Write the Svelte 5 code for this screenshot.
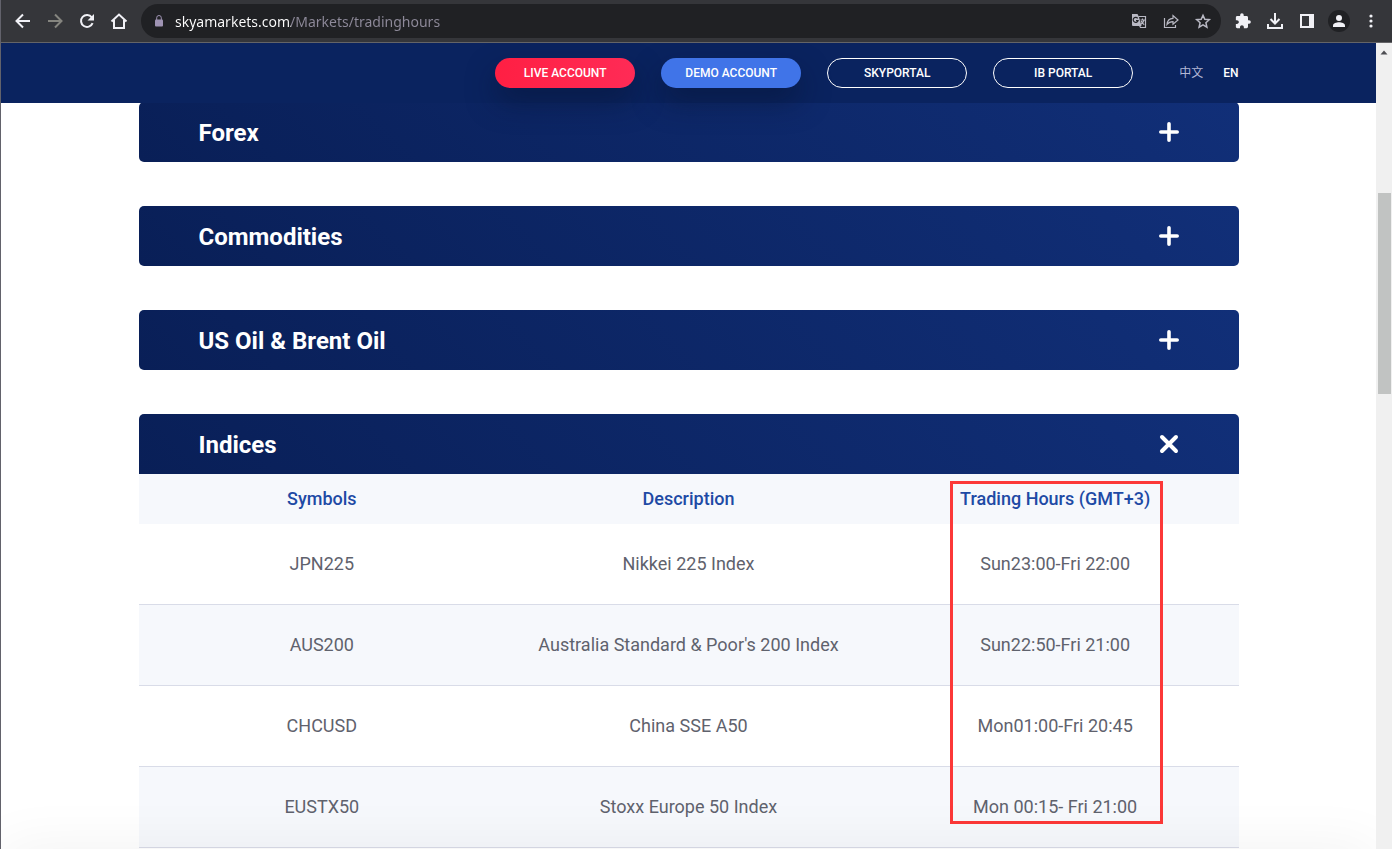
<script lang="ts">
  interface Instrument {
    symbol: string;
    description: string;
    hours: string;
  }

  interface Market {
    name: string;
    instruments: Instrument[];
  }

  const markets: Market[] = [
    { name: "Forex", instruments: [] },
    { name: "Commodities", instruments: [] },
    { name: "US Oil & Brent Oil", instruments: [] },
    {
      name: "Indices",
      instruments: [
        { symbol: "JPN225", description: "Nikkei 225 Index", hours: "Sun23:00-Fri 22:00" },
        { symbol: "AUS200", description: "Australia Standard & Poor's 200 Index", hours: "Sun22:50-Fri 21:00" },
        { symbol: "CHCUSD", description: "China SSE A50", hours: "Mon01:00-Fri 20:45" },
        { symbol: "EUSTX50", description: "Stoxx Europe 50 Index", hours: "Mon 00:15- Fri 21:00" },
      ],
    },
  ];

  let address = $state("skyamarkets.com/Markets/tradinghours");
  let openMarket = $state("Indices");

  function toggle(name: string) {
    openMarket = openMarket === name ? "" : name;
  }
</script>

<div class="browser">
  <div class="toolbar">
    <button class="tool" aria-label="Back">
      <svg class="icon" viewBox="0 0 20 20"><path d="M17 10H4M10 3.5L3.5 10l6.5 6.5" /></svg>
    </button>
    <button class="tool dim" aria-label="Forward">
      <svg class="icon" viewBox="0 0 20 20"><path d="M3 10h13M10 3.5L16.5 10 10 16.5" /></svg>
    </button>
    <button class="tool" aria-label="Reload">
      <svg class="icon" viewBox="0 0 20 20">
        <path d="M15.6 12.2A6 6 0 1 1 14.8 6.3" />
        <path class="solid" d="M17 3v6.5h-6.5z" />
      </svg>
    </button>
    <button class="tool" aria-label="Home">
      <svg class="icon" viewBox="0 0 20 20"><path d="M2.5 10.5L10 3.5l7.5 7M5 9v8h10V9" /></svg>
    </button>

    <div class="omnibox">
      <svg class="lock" viewBox="0 0 10 14">
        <path d="M2.7 6V3.8a2.3 2.3 0 0 1 4.6 0V6" />
        <rect x="1" y="5.5" width="8" height="7" rx="1" />
      </svg>
      <input class="address" type="text" aria-label="Address" spellcheck="false" bind:value={address} />
      <button class="tool muted" aria-label="Translate">
        <svg class="icon" viewBox="0 0 20 20">
          <path class="solid" d="M3 3h5.500l1.500 3 2.500 9H4a1 1 0 0 1-1-1z" />
          <path class="thin" d="M9.500 5.500h7v11h-5l-1-2M11.500 9H16M13.500 7.500V9M15 9c-.5 2-1.500 3-3 4.200M12.200 10c.6 1.600 1.700 2.800 3 3.700" />
          <path class="cutout" d="M8.700 7.300A2.500 2.500 0 1 0 9.100 9.500H7" />
        </svg>
      </button>
      <button class="tool muted" aria-label="Share">
        <svg class="icon" viewBox="0 0 20 20">
          <path class="thin" d="M3.500 7v9.500h11V14M6 13.500c.3-4 2.500-6 6-6.200V4.500L17 9l-5 4.300v-2.600c-2.800 0-4.500.8-6 2.800z" />
        </svg>
      </button>
      <button class="tool muted" aria-label="Bookmark">
        <svg class="icon" viewBox="0 0 20 20">
          <path class="medium" d="M10 4.300l1.800 4 4.500.4-3.400 3 1 4.400-3.900-2.300-3.900 2.300 1-4.400-3.400-3 4.500-.4z" />
        </svg>
      </button>
    </div>

    <button class="tool" aria-label="Extensions">
      <svg class="icon" viewBox="-2 -2 28 28">
        <path class="solid" d="M20.5 11H19V7c0-1.1-.9-2-2-2h-4V3.5a2.5 2.5 0 0 0-5 0V5H4c-1.1 0-1.99.9-1.99 2v3.8H3.5c1.49 0 2.7 1.21 2.7 2.7s-1.21 2.7-2.7 2.7H2V20c0 1.1.9 2 2 2h3.8v-1.5c0-1.49 1.21-2.7 2.7-2.7 1.49 0 2.7 1.21 2.7 2.7V22H17c1.1 0 2-.9 2-2v-4h1.5a2.5 2.5 0 0 0 0-5z" />
      </svg>
    </button>
    <button class="tool" aria-label="Downloads">
      <svg class="icon" viewBox="0 0 20 20"><path d="M10 2v10M5.5 8l4.5 4.5L14.500 8M3 13v4h14v-4" /></svg>
    </button>
    <button class="tool" aria-label="Side panel">
      <svg class="icon" viewBox="0 0 20 20"><path class="solid" fill-rule="evenodd" d="M3 3h14v14H3zM5 5v10h7V5z" /></svg>
    </button>
    <button class="tool" aria-label="Profile">
      <svg class="avatar" viewBox="0 0 22 22">
        <circle class="disc" cx="11" cy="11" r="11" />
        <circle class="solid" cx="11" cy="8" r="3" />
        <path class="solid" d="M5 17v-1.500c0-2.200 3.500-3.300 6-3.300s6 1.100 6 3.300V17z" />
      </svg>
    </button>
    <button class="tool" aria-label="Menu">
      <svg class="icon" viewBox="0 0 20 20">
        <circle class="solid" cx="10" cy="5" r="1.600" />
        <circle class="solid" cx="10" cy="10" r="1.600" />
        <circle class="solid" cx="10" cy="15" r="1.600" />
      </svg>
    </button>
  </div>

  <div class="viewport">
    <div class="page">
      <header class="site-header">
        <nav class="container nav">
          <a class="pill live" href="#live">LIVE ACCOUNT</a>
          <a class="pill demo" href="#demo">DEMO ACCOUNT</a>
          <a class="pill" href="#skyportal">SKYPORTAL</a>
          <a class="pill" href="#ibportal">IB PORTAL</a>
          <div class="languages">
            <a class="language" href="#zh" lang="zh">中文</a>
            <a class="language active" href="#en">EN</a>
          </div>
        </nav>
      </header>

      <main class="container markets">
        {#each markets as market (market.name)}
          {@const open = openMarket === market.name}
          <section>
            <h2 class="market-heading">
              <button class="market-toggle" class:open aria-expanded={open} onclick={() => toggle(market.name)}>
                <span class="market-name">{market.name}</span>
                <svg class="market-icon" viewBox="0 0 20 20" aria-hidden="true">
                  {#if open}
                    <path class="cross" d="M3 3l14 14M17 3L3 17" />
                  {:else}
                    <path d="M10 1.8v16.4M1.8 10h16.4" />
                  {/if}
                </svg>
              </button>
            </h2>
            {#if open}
              <div class="hours">
                <table>
                  <thead>
                    <tr>
                      <th>Symbols</th>
                      <th>Description</th>
                      <th>Trading Hours (GMT+3)</th>
                    </tr>
                  </thead>
                  <tbody>
                    {#each market.instruments as instrument (instrument.symbol)}
                      <tr>
                        <td>{instrument.symbol}</td>
                        <td>{instrument.description}</td>
                        <td>{instrument.hours}</td>
                      </tr>
                    {/each}
                  </tbody>
                </table>
                <div class="highlight"></div>
              </div>
            {/if}
          </section>
        {/each}
      </main>
      <div class="bottom-shadow"></div>
    </div>

    <div class="scrollbar">
      <svg class="scroll-arrow" viewBox="0 0 16 17"><path d="M4.500 11.500L8 7.500l3.500 4z" /></svg>
      <div class="track-before"></div>
      <div class="thumb"></div>
      <div class="track-after"></div>
    </div>
  </div>
</div>

<style>
  :global(body) {
    background: #fff;
  }

  .browser {
    box-sizing: border-box;
    display: flex;
    flex-direction: column;
    height: 100vh;
    overflow: hidden;
    border-left: 1px solid #62626b;
    font-family: Roboto, "Noto Sans CJK SC", sans-serif;
  }

  /* Browser toolbar */
  .toolbar {
    display: flex;
    align-items: center;
    flex: none;
    height: 42px;
    padding-left: 6px;
    padding-right: 5px;
    background: #35363a;
    border-bottom: 1px solid #646467;
  }

  .tool {
    display: flex;
    align-items: center;
    justify-content: center;
    flex: none;
    width: 32px;
    height: 32px;
    padding: 0;
    border: 0;
    background: none;
    color: #f1f1f6;
  }

  .tool.dim {
    color: #85857f;
  }

  .tool.muted {
    color: #b9b9c4;
  }

  .icon {
    width: 20px;
    height: 20px;
  }

  .icon path {
    fill: none;
    stroke: currentColor;
    stroke-width: 2;
  }

  .icon .thin {
    stroke-width: 1.2;
  }

  .icon .medium {
    stroke-width: 1.5;
  }

  .icon .solid,
  .avatar .solid {
    fill: currentColor;
    stroke: none;
  }

  .icon .cutout {
    stroke: #202124;
    stroke-width: 1.2;
  }

  .avatar {
    width: 22px;
    height: 22px;
  }

  .avatar .disc {
    fill: #202124;
  }

  .omnibox {
    box-sizing: border-box;
    display: flex;
    align-items: center;
    flex: 1;
    height: 34px;
    margin: 0 6px;
    padding-left: 13px;
    padding-right: 2px;
    border-radius: 17px;
    background: #202124;
  }

  .lock {
    flex: none;
    width: 10px;
    height: 14px;
    margin-right: 11px;
    fill: #9f94b4;
  }

  .lock path {
    fill: none;
    stroke: #9f94b4;
  }

  /* The host is white, the path after it is grey */
  .address {
    flex: 1;
    min-width: 0;
    height: 24px;
    padding: 0;
    border: 0;
    outline: none;
    background: linear-gradient(to right, #fff 116px, #8e8a9a 116px);
    background-clip: text;
    color: transparent;
    font-family: "Noto Sans", sans-serif;
    font-size: 14px;
  }

  /* Site */
  .viewport {
    display: flex;
    flex: 1;
    min-height: 0;
  }

  .page {
    position: relative;
    flex: 1;
    min-width: 0;
    overflow: hidden;
  }

  .container {
    box-sizing: border-box;
    max-width: 1100px;
    margin: 0 auto;
  }

  .site-header {
    position: relative;
    z-index: 1;
    background: #0a235f;
  }

  .nav {
    display: flex;
    align-items: center;
    justify-content: flex-end;
    gap: 26px;
    height: 60px;
  }

  .pill {
    box-sizing: border-box;
    width: 140px;
    height: 30px;
    border: 1px solid #fff;
    border-radius: 15px;
    color: #fff;
    font-size: 12px;
    font-weight: 500;
    line-height: 28px;
    text-align: center;
    text-decoration: none;
  }

  .pill.live {
    border: 0;
    line-height: 30px;
    background: linear-gradient(90deg, #ff1f43, #ff2b56);
    box-shadow: 0 14px 28px rgba(8, 20, 50, 0.5);
  }

  .pill.demo {
    border: 0;
    line-height: 30px;
    background: #4074e8;
    box-shadow: 0 14px 28px rgba(8, 20, 50, 0.5);
  }

  .languages {
    display: flex;
    gap: 20px;
    padding-left: 20px;
  }

  .language {
    color: #b4b8d6;
    font-size: 12px;
    line-height: 20px;
    text-decoration: none;
  }

  .language.active {
    color: #fff;
    font-weight: 500;
  }

  .markets {
    display: flex;
    flex-direction: column;
    gap: 44px;
    margin-top: -1px;
  }

  .market-heading {
    margin: 0;
    font-size: 24px;
  }

  .market-toggle {
    display: flex;
    align-items: center;
    justify-content: space-between;
    width: 100%;
    height: 60px;
    padding: 0 60px;
    border: 0;
    border-radius: 5px;
    background: linear-gradient(45deg, #091f57, #112f78);
    color: #fff;
    font: inherit;
    cursor: pointer;
  }

  .market-toggle.open {
    border-radius: 5px 5px 0 0;
  }

  .market-name {
    padding-top: 2px;
    line-height: 30px;
  }

  .market-icon {
    width: 20px;
    height: 20px;
    fill: none;
    stroke: #fff;
    stroke-width: 3.6;
    stroke-linecap: round;
  }

  .market-icon .cross {
    stroke-width: 4;
  }

  .hours {
    position: relative;
  }

  table {
    width: 100%;
    border-collapse: separate;
    border-spacing: 0;
    table-layout: fixed;
    color: #5f626d;
    font-size: 18px;
    text-align: center;
  }

  th {
    height: 48px;
    padding: 0 0 2px;
    background: #f6f8fc;
    color: #1e4aa5;
    font-weight: 500;
  }

  td {
    height: 78px;
    padding: 0 0 2px;
    border-bottom: 1px solid #d9dce8;
  }

  tbody tr:nth-child(even) {
    background: #f6f8fc;
  }

  .highlight {
    position: absolute;
    box-sizing: border-box;
    top: 7px;
    bottom: 24px;
    left: calc(100% * 5 / 6 - 105px);
    width: 213px;
    border: 3px solid #fc3838;
    pointer-events: none;
  }

  .bottom-shadow {
    position: absolute;
    top: 100%;
    right: 0;
    left: 0;
    height: 60px;
    box-shadow: 0 0 60px rgba(0, 0, 0, 0.06);
    pointer-events: none;
  }

  .scrollbar {
    display: flex;
    flex-direction: column;
    flex: none;
    width: 16px;
    background: #f0f0f0;
  }

  .scroll-arrow {
    flex: none;
    width: 16px;
    height: 17px;
    fill: #4d4d52;
  }

  .track-before {
    flex: 133;
  }

  .thumb {
    flex: 201;
    margin: 0 1px 0 2px;
    background: #c1c3c2;
  }

  .track-after {
    flex: 455;
  }
</style>
